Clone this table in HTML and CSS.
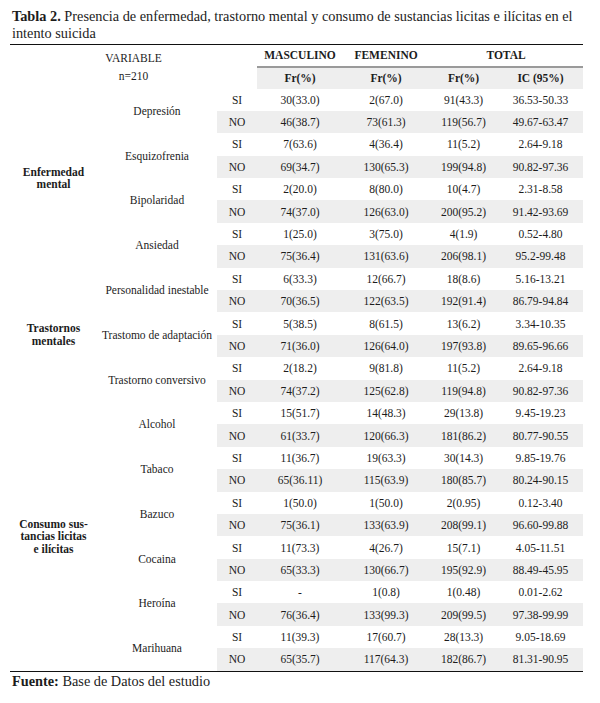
FILE: index.html
```html
<!DOCTYPE html>
<html lang="es">
<head>
<meta charset="utf-8">
<link rel="stylesheet" href="styles.css">
</head>
<body>
<p class="title"><b>Tabla 2.</b> Presencia de enfermedad, trastorno mental y consumo de sustancias licitas e ilícitas en el<br>intento suicida</p>
<table class="tbl">
  <colgroup>
    <col class="c1"><col class="c2"><col class="c3"><col class="c4"><col class="c5"><col class="c6"><col class="c7">
  </colgroup>
  <thead>
    <tr class="h1">
      <th colspan="3" rowspan="2" class="var">VARIABLE<br>n=210</th>
      <th class="b">MASCULINO</th>
      <th class="b">FEMENINO</th>
      <th colspan="2" class="b">TOTAL</th>
    </tr>
    <tr class="h2">
      <th class="b g">Fr(%)</th>
      <th class="b g">Fr(%)</th>
      <th class="b g">Fr(%)</th>
      <th class="b g">IC (95%)</th>
    </tr>
  </thead>
  <tbody>
    <tr class="si"><td rowspan="8" class="cat">Enfermedad<br>mental</td><td rowspan="2" class="name">Depresión</td><td>SI</td><td>30(33.0)</td><td>2(67.0)</td><td>91(43.3)</td><td>36.53-50.33</td></tr>
    <tr class="no"><td>NO</td><td>46(38.7)</td><td>73(61.3)</td><td>119(56.7)</td><td>49.67-63.47</td></tr>
    <tr class="si"><td rowspan="2" class="name">Esquizofrenia</td><td>SI</td><td>7(63.6)</td><td>4(36.4)</td><td>11(5.2)</td><td>2.64-9.18</td></tr>
    <tr class="no"><td>NO</td><td>69(34.7)</td><td>130(65.3)</td><td>199(94.8)</td><td>90.82-97.36</td></tr>
    <tr class="si"><td rowspan="2" class="name">Bipolaridad</td><td>SI</td><td>2(20.0)</td><td>8(80.0)</td><td>10(4.7)</td><td>2.31-8.58</td></tr>
    <tr class="no"><td>NO</td><td>74(37.0)</td><td>126(63.0)</td><td>200(95.2)</td><td>91.42-93.69</td></tr>
    <tr class="si"><td rowspan="2" class="name">Ansiedad</td><td>SI</td><td>1(25.0)</td><td>3(75.0)</td><td>4(1.9)</td><td>0.52-4.80</td></tr>
    <tr class="no"><td>NO</td><td>75(36.4)</td><td>131(63.6)</td><td>206(98.1)</td><td>95.2-99.48</td></tr>
    <tr class="si"><td rowspan="6" class="cat">Trastornos<br>mentales</td><td rowspan="2" class="name">Personalidad inestable</td><td>SI</td><td>6(33.3)</td><td>12(66.7)</td><td>18(8.6)</td><td>5.16-13.21</td></tr>
    <tr class="no"><td>NO</td><td>70(36.5)</td><td>122(63.5)</td><td>192(91.4)</td><td>86.79-94.84</td></tr>
    <tr class="si"><td rowspan="2" class="name">Trastomo de adaptación</td><td>SI</td><td>5(38.5)</td><td>8(61.5)</td><td>13(6.2)</td><td>3.34-10.35</td></tr>
    <tr class="no"><td>NO</td><td>71(36.0)</td><td>126(64.0)</td><td>197(93.8)</td><td>89.65-96.66</td></tr>
    <tr class="si"><td rowspan="2" class="name">Trastorno conversivo</td><td>SI</td><td>2(18.2)</td><td>9(81.8)</td><td>11(5.2)</td><td>2.64-9.18</td></tr>
    <tr class="no"><td>NO</td><td>74(37.2)</td><td>125(62.8)</td><td>119(94.8)</td><td>90.82-97.36</td></tr>
    <tr class="si"><td rowspan="12" class="cat">Consumo sus-<br>tancias licitas<br>e ilícitas</td><td rowspan="2" class="name">Alcohol</td><td>SI</td><td>15(51.7)</td><td>14(48.3)</td><td>29(13.8)</td><td>9.45-19.23</td></tr>
    <tr class="no"><td>NO</td><td>61(33.7)</td><td>120(66.3)</td><td>181(86.2)</td><td>80.77-90.55</td></tr>
    <tr class="si"><td rowspan="2" class="name">Tabaco</td><td>SI</td><td>11(36.7)</td><td>19(63.3)</td><td>30(14.3)</td><td>9.85-19.76</td></tr>
    <tr class="no"><td>NO</td><td>65(36.11)</td><td>115(63.9)</td><td>180(85.7)</td><td>80.24-90.15</td></tr>
    <tr class="si"><td rowspan="2" class="name">Bazuco</td><td>SI</td><td>1(50.0)</td><td>1(50.0)</td><td>2(0.95)</td><td>0.12-3.40</td></tr>
    <tr class="no"><td>NO</td><td>75(36.1)</td><td>133(63.9)</td><td>208(99.1)</td><td>96.60-99.88</td></tr>
    <tr class="si"><td rowspan="2" class="name">Cocaina</td><td>SI</td><td>11(73.3)</td><td>4(26.7)</td><td>15(7.1)</td><td>4.05-11.51</td></tr>
    <tr class="no"><td>NO</td><td>65(33.3)</td><td>130(66.7)</td><td>195(92.9)</td><td>88.49-45.95</td></tr>
    <tr class="si"><td rowspan="2" class="name">Heroína</td><td>SI</td><td>-</td><td>1(0.8)</td><td>1(0.48)</td><td>0.01-2.62</td></tr>
    <tr class="no"><td>NO</td><td>76(36.4)</td><td>133(99.3)</td><td>209(99.5)</td><td>97.38-99.99</td></tr>
    <tr class="si"><td rowspan="2" class="name">Marihuana</td><td>SI</td><td>11(39.3)</td><td>17(60.7)</td><td>28(13.3)</td><td>9.05-18.69</td></tr>
    <tr class="no"><td>NO</td><td>65(35.7)</td><td>117(64.3)</td><td>182(86.7)</td><td>81.31-90.95</td></tr>
  </tbody>
</table>
<p class="source"><b>Fuente:</b> Base de Datos del estudio</p>
</body>
</html>
```

FILE: styles.css
```css
html, body {
  background: #ffffff;
}
body {
  margin: 8px 0 0 10px;
  font-family: "Liberation Serif", "Times New Roman", serif;
  color: #1c1c1c;
}
.title {
  margin: 0;
  padding-left: 2px;
  font-size: 14.3px;
  line-height: 16.5px;
  width: 580px;
  white-space: nowrap;
}
.title b {
  font-weight: bold;
}
.tbl {
  margin-top: 2.5px;
  width: 573px;
  table-layout: fixed;
  border-collapse: separate;
  border-spacing: 0;
  border-top: 1px solid #111;
  border-bottom: 1px solid #111;
  font-size: 11.5px;
}
.c1 { width: 87px; }
.c2 { width: 120px; }
.c3 { width: 40px; }
.c4 { width: 86px; }
.c5 { width: 86px; }
.c6 { width: 69px; }
.c7 { width: 85px; }
.tbl th, .tbl td {
  padding: 0;
  text-align: center;
  vertical-align: middle;
  box-sizing: border-box;
  white-space: nowrap;
}
.tbl th {
  font-weight: normal;
}
.tbl th.b {
  font-weight: bold;
}
.h1 th {
  height: 21px;
}
.h2 th {
  height: 23px;
  border-top: 2px solid #9a9a9a;
}
.h2 th.g {
  background: #eeeeee;
}
.var {
  line-height: 18px;
  font-weight: normal;
}
.tbl tbody td {
  height: 22.4px;
}
.no td {
  background: #eeeeee;
}
.tbl td.cat {
  font-weight: bold;
  line-height: 12.5px;
  background: #ffffff;
}
.tbl td.name {
  background: #ffffff;
}
.source {
  margin: 2px 0 0 2px;
  font-size: 14.3px;
  line-height: 15px;
}
```
